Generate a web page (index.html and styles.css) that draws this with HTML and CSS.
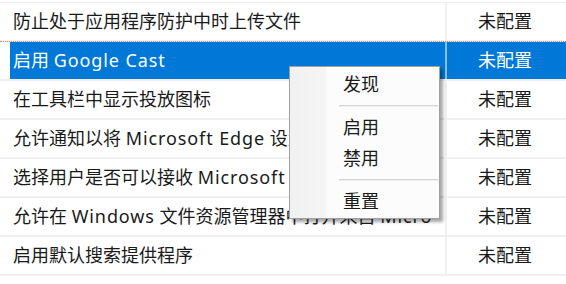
FILE: index.html
```html
<!DOCTYPE html>
<html lang="zh-CN">
<head>
<meta charset="utf-8">
<link rel="stylesheet" href="styles.css">
</head>
<body>
<div class="list">
  <div class="row"><div class="name">防止处于应用程序防护中时上传文件</div><div class="state">未配置</div></div>
  <div class="row selected"><div class="name"><span class="sel">启用 <span class="lat">Google Cast</span></span></div><div class="state">未配置</div></div>
  <div class="row"><div class="name">在工具栏中显示投放图标</div><div class="state">未配置</div></div>
  <div class="row"><div class="name">允许通知以将 <span class="lat">Microsoft Edge</span> 设置为默认</div><div class="state">未配置</div></div>
  <div class="row"><div class="name">选择用户是否可以接收 <span class="lat">Microsoft Edge</span></div><div class="state">未配置</div></div>
  <div class="row"><div class="name">允许在 <span class="lat">Windows</span> 文件资源管理器中打开来自 <span class="lat">Micro</span></div><div class="state">未配置</div></div>
  <div class="row"><div class="name">启用默认搜索提供程序</div><div class="state">未配置</div></div>
</div>
<div class="menu">
  <div class="item">发现</div>
  <div class="sep"></div>
  <div class="item">启用</div>
  <div class="item">禁用</div>
  <div class="sep"></div>
  <div class="item">重置</div>
</div>
</body>
</html>
```
FILE: styles.css
```css
html, body {
  margin: 0;
  padding: 0;
  background: #ffffff;
  overflow: hidden;
}
body {
  width: 566px;
  height: 284px;
  position: relative;
  font-family: "Noto Sans", "Noto Sans CJK SC", sans-serif;
  font-size: 18px;
  color: #1a1a1a;
}
.lat {
  letter-spacing: 0.9px;
}
.list {
  padding-top: 2px;
}
.list::before {
  content: "";
  display: block;
  height: 1px;
  background: #f0f0f0;
}
.row {
  display: flex;
  height: 37px;
  border-bottom: 2px solid #f0f0f0;
}
.name {
  width: 447px;
  box-sizing: border-box;
  padding-left: 13px;
  display: flex;
  align-items: stretch;
  white-space: pre;
  overflow: hidden;
  border-right: 2px solid #f0f0f0;
  line-height: 37px;
}
.sel {
  display: block;
  margin-left: -3px;
  padding-left: 3px;
  flex: 1;
  line-height: 37px;
}
.state {
  flex: 1;
  line-height: 37px;
  padding-left: 31px;
  white-space: nowrap;
}
.selected .sel,
.selected .state {
  background: #0078d7;
  color: #ffffff;
}
.selected {
  border-top: 1px dotted #c09070;
  margin-top: -1px;
}
.selected .name {
  border-right-color: #8cbcea;
}
.menu {
  position: absolute;
  left: 289px;
  top: 66px;
  width: 149px;
  padding: 2px 0 1px 0;
  background: linear-gradient(to right, #f1f1f1 0, #f5f5f5 36px, #fcfcfc 37px);
  border: 1px solid #a0a0a0;
  box-shadow: 3px 3px 3px rgba(0, 0, 0, 0.35);
}
.item {
  height: 31px;
  line-height: 31px;
  padding-left: 53px;
  color: #1a1a1a;
}
.sep {
  height: 1px;
  margin: 5px 1px 5px 49px;
  background: #d4d4d4;
  border-bottom: 1px solid #efefef;
}
```
